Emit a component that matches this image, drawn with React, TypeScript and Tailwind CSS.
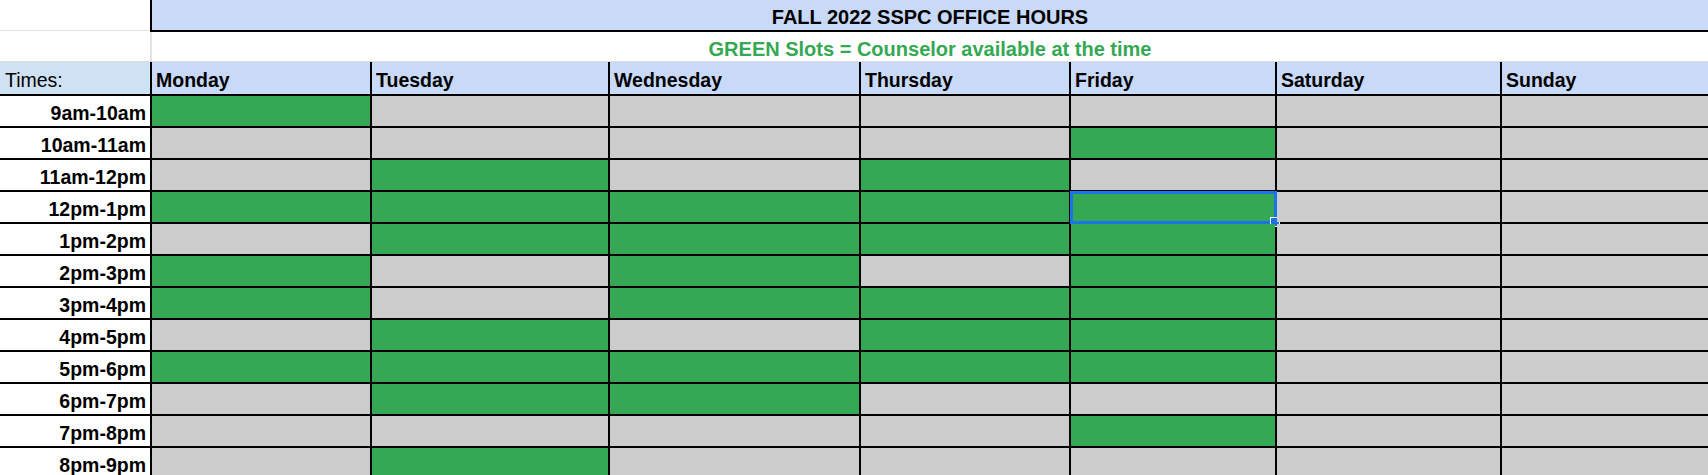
const days = ['Monday', 'Tuesday', 'Wednesday', 'Thursday', 'Friday', 'Saturday', 'Sunday'];

// 1 = counselor available (green), 0 = gray
const slots: [string, number[]][] = [
    ['9am-10am', [1, 0, 0, 0, 0, 0, 0]],
    ['10am-11am', [0, 0, 0, 0, 1, 0, 0]],
    ['11am-12pm', [0, 1, 0, 1, 0, 0, 0]],
    ['12pm-1pm', [1, 1, 1, 1, 1, 0, 0]],
    ['1pm-2pm', [0, 1, 1, 1, 1, 0, 0]],
    ['2pm-3pm', [1, 0, 1, 0, 1, 0, 0]],
    ['3pm-4pm', [1, 0, 1, 1, 1, 0, 0]],
    ['4pm-5pm', [0, 1, 0, 1, 1, 0, 0]],
    ['5pm-6pm', [1, 1, 1, 1, 1, 0, 0]],
    ['6pm-7pm', [0, 1, 1, 0, 0, 0, 0]],
    ['7pm-8pm', [0, 0, 0, 0, 1, 0, 0]],
    ['8pm-9pm', [0, 1, 0, 0, 0, 0, 0]],
];

const cols = 'grid grid-cols-[150px_218px_236px_249px_208px_204px_223px_1fr] gap-x-[2px] bg-black';

export default function App() {
    return (
        <div className="h-[475px] w-[1708px] overflow-hidden bg-white font-['Liberation_Sans',Arial,sans-serif] text-black">
            <div className="flex h-[32px]">
                <div className="h-[31px] w-[150px] border-b border-[#e2e2e2]"/>
                <div className="w-[2px] bg-black"/>
                <div className="flex flex-1 items-end justify-center border-b-2 border-black bg-[#c9daf8] pb-[1px] text-[20px] font-bold leading-[23px]">
                    FALL 2022 SSPC OFFICE HOURS
                </div>
            </div>
            <div className="flex h-[30px] border-b border-[#dadce0]">
                <div className="w-[150px]"/>
                <div className="w-[2px] bg-[#e2e2e2]"/>
                <div className="flex flex-1 items-end justify-center text-[20px] font-bold leading-[23px] text-[#34a853]">
                    GREEN Slots = Counselor available at the time
                </div>
            </div>
            <div className={`${cols} h-[34px] border-b-2 border-black`}>
                <div className="flex items-end bg-[#cfe2f3] pb-[3px] pl-[5px] text-[19.5px] leading-[22px]">Times:</div>
                {days.map((d) => (
                    <div key={d} className="flex items-end bg-[#c9daf8] pb-[3px] pl-[4px] text-[19.5px] font-bold leading-[22px]">
                        {d}
                    </div>
                ))}
            </div>
            {slots.map(([time, row], r) => (
                <div key={time} className={`${cols} h-[32px] border-b-2 border-black`}>
                    <div className="flex items-end justify-end bg-white pb-[2px] pr-[4px] text-[19.5px] font-bold leading-[22px]">
                        {time}
                    </div>
                    {row.map((v, c) => (
                        <div key={c} className={`relative ${v ? 'bg-[#34a853]' : 'bg-[#cccccc]'}`}>
                            {r === 3 && c === 4 && (
                                <>
                                    <div className="absolute -top-[1px] -left-[1px] -right-[2px] -bottom-[2px] border-[3px] border-[#1a73e8]"/>
                                    <div className="absolute -right-[5px] -bottom-[5px] h-[10px] w-[10px] border border-white bg-[#1a73e8]"/>
                                </>
                            )}
                        </div>
                    ))}
                </div>
            ))}
        </div>
    );
}
